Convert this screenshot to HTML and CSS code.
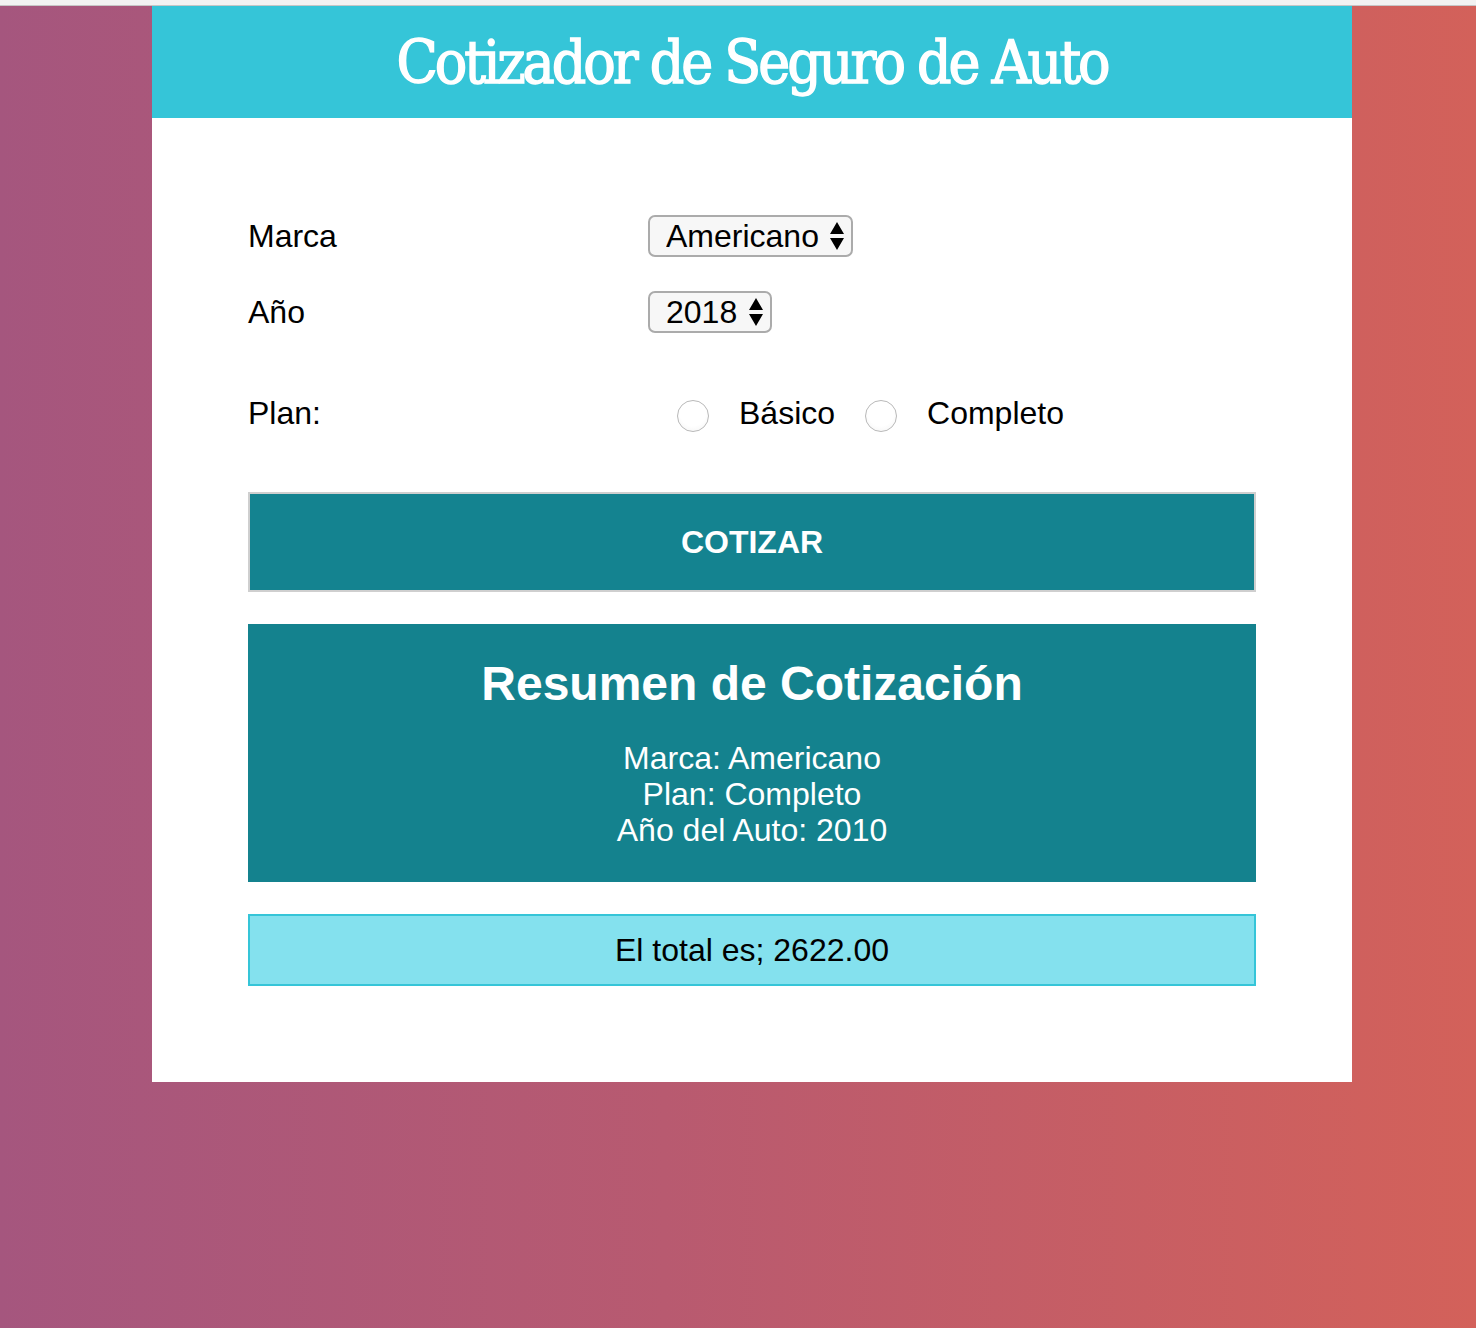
FILE: index.html
```html
<!DOCTYPE html>
<html lang="es">
<head>
<meta charset="utf-8">
<title>Cotizador de Seguro de Auto</title>
<link rel="stylesheet" href="styles.css">
</head>
<body>
<div class="topstrip"></div>
<div class="container">
  <header class="header">
    <h1 class="title">Cotizador de Seguro de Auto</h1>
  </header>
  <form class="form">
    <div class="row">
      <label class="label">Marca</label>
      <span class="select-wrap">
        <select class="select"><option>Americano</option></select>
        <svg class="arrows" width="16" height="30" viewBox="0 0 16 30"><path d="M8 1 L15 13 H1 Z M1 17 H15 L8 29 Z" fill="#000"/></svg>
      </span>
    </div>
    <div class="row">
      <label class="label">Año</label>
      <span class="select-wrap">
        <select class="select"><option>2018</option></select>
        <svg class="arrows" width="16" height="30" viewBox="0 0 16 30"><path d="M8 1 L15 13 H1 Z M1 17 H15 L8 29 Z" fill="#000"/></svg>
      </span>
    </div>
    <div class="row plan">
      <label class="label">Plan:</label>
      <input class="radio" type="radio" name="plan"><span class="radio-text">Básico</span>
      <input class="radio" type="radio" name="plan"><span class="radio-text">Completo</span>
    </div>
    <button class="btn" type="button">COTIZAR</button>
    <div class="summary">
      <h2 class="summary-title">Resumen de Cotización</h2>
      <p class="summary-line">Marca: Americano</p>
      <p class="summary-line">Plan: Completo</p>
      <p class="summary-line">Año del Auto: 2010</p>
    </div>
    <div class="total">El total es; 2622.00</div>
  </form>
</div>
</body>
</html>
```
FILE: styles.css
```css
* { box-sizing: border-box; }
html, body { margin: 0; padding: 0; }
body {
  min-height: 1328px;
  background: linear-gradient(to right, #a5567e 0%, #b85a70 45%, #d3615a 100%);
  font-family: "Liberation Sans", Arial, sans-serif;
  color: #000;
}
.topstrip {
  height: 6px;
  background: #f2f2f2;
  border-bottom: 1px solid #c6c6c6;
}
.container {
  width: 1200px;
  margin-left: 152px;
  background: #fff;
}
.header {
  height: 112px;
  background: #35c5d8;
  display: flex;
  align-items: center;
  justify-content: center;
}
.title {
  margin: 0;
  color: #fff;
  font-family: "DejaVu Serif Condensed", "DejaVu Serif", serif;
  font-stretch: condensed;
  font-weight: normal;
  font-size: 60px;
  letter-spacing: -3px;
  -webkit-text-stroke: 1.4px #fff;
  line-height: 1;
}
.form {
  padding: 97px 96px 96px;
}
.row {
  display: flex;
  align-items: center;
  height: 42px;
  font-size: 32px;
}
.row + .row { margin-top: 34px; }
.row.plan { margin-top: 59px; }
.label {
  width: 400px;
  flex: none;
}
.select-wrap {
  position: relative;
  display: inline-block;
  height: 42px;
}
.select {
  -webkit-appearance: none;
  appearance: none;
  height: 42px;
  font-family: "Liberation Sans", Arial, sans-serif;
  font-size: 32px;
  color: #000;
  padding: 0 32px 0 16px;
  border: 2px solid #ababab;
  border-radius: 7px;
  background: #f7f7f7;
  line-height: 38px;
}
.arrows {
  position: absolute;
  right: 8px;
  top: 6px;
  pointer-events: none;
}
.radio {
  -webkit-appearance: none;
  appearance: none;
  width: 32px;
  height: 32px;
  margin: 6px 30px 0 29px;
  border: 1px solid #b9b9b9;
  border-radius: 50%;
  background: radial-gradient(circle at 50% 40%, #ffffff 0%, #ffffff 55%, #f1f1f1 100%);
  flex: none;
}
.radio-text + .radio { margin-left: 30px; }
.btn {
  display: block;
  width: 100%;
  height: 100px;
  margin-top: 58px;
  border: 2px solid #cfcfcf;
  background: #148390;
  color: #fff;
  font-family: "Liberation Sans", Arial, sans-serif;
  font-weight: bold;
  font-size: 32px;
  padding: 0;
}
.summary {
  margin-top: 32px;
  height: 258px;
  background: #14828e;
  color: #fff;
  text-align: center;
  padding-top: 32px;
}
.summary-title {
  margin: 0 0 29px;
  font-size: 48px;
  font-weight: bold;
  line-height: 55px;
}
.summary-line {
  margin: 0;
  font-size: 32px;
  line-height: 36px;
}
.total {
  margin-top: 32px;
  height: 72px;
  background: #84e1ee;
  border: 2px solid #35c5d8;
  display: flex;
  align-items: center;
  justify-content: center;
  font-size: 32px;
}
```
